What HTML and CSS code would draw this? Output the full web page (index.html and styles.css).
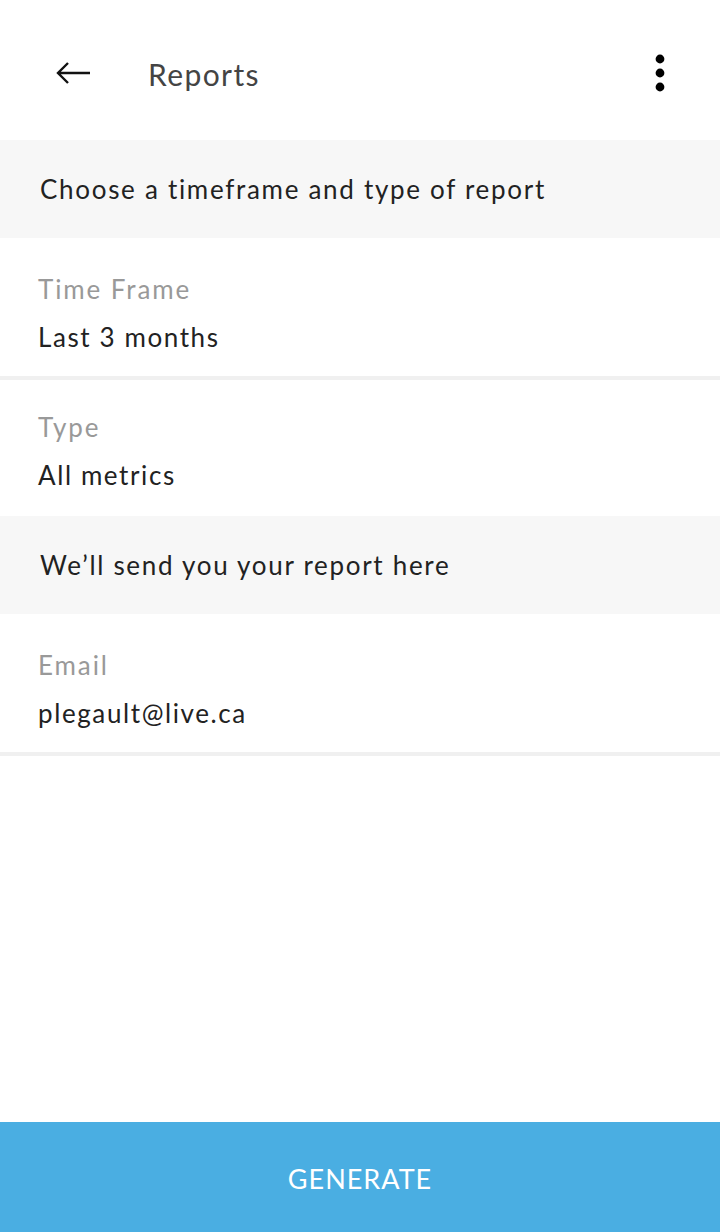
FILE: index.html
```html
<!DOCTYPE html>
<html lang="en">
<head>
  <meta charset="UTF-8">
  <meta name="viewport" content="width=device-width, initial-scale=1">
  <title>Reports</title>
  <link rel="stylesheet" href="styles.css">
</head>
<body>
  <div class="app">
    <!-- Top bar -->
    <div class="topbar">
      <svg class="back-icon" viewBox="0 0 36 24" aria-label="Back">
        <path d="M35 12H3M13 2L3 12l10 10" fill="none" stroke="#111" stroke-width="2.4"/>
      </svg>
      <div class="title">Reports</div>
      <svg class="more-icon" viewBox="0 0 10 38" aria-label="More">
        <circle cx="5" cy="5" r="4.4" fill="#000"/>
        <circle cx="5" cy="19" r="4.4" fill="#000"/>
        <circle cx="5" cy="33" r="4.4" fill="#000"/>
      </svg>
    </div>

    <div class="section">Choose a timeframe and type of report</div>

    <div class="field divided">
      <div class="label">Time Frame</div>
      <div class="value">Last 3 months</div>
    </div>
    <div class="field">
      <div class="label">Type</div>
      <div class="value">All metrics</div>
    </div>

    <div class="section">We’ll send you your report here</div>

    <div class="field divided">
      <div class="label">Email</div>
      <div class="value">plegault@live.ca</div>
    </div>

    <div class="spacer"></div>

    <button class="generate">GENERATE</button>
  </div>
</body>
</html>
```

FILE: styles.css
```css
* {
  margin: 0;
  padding: 0;
  box-sizing: border-box;
}

body {
  background: #ffffff;
  font-family: Lato, "Open Sans", sans-serif;
  color: #222;
}

.app {
  display: flex;
  flex-direction: column;
  height: 1232px;
}

/* Top bar */
.topbar {
  height: 140px;
  display: flex;
  align-items: center;
  padding: 0 55px 0 55px;
}

.back-icon {
  width: 36px;
  height: 24px;
  margin-top: 6px;
}

.title {
  margin-left: 57px;
  font-size: 30px;
  color: #444;
  flex: 1;
  margin-top: 8px;
  letter-spacing: 1.4px;
}

.more-icon {
  width: 10px;
  height: 38px;
  margin-top: 6px;
}

/* Gray section header */
.section {
  background: #f7f7f7;
  height: 98px;
  display: flex;
  align-items: center;
  padding-left: 40px;
  font-size: 26px;
  color: #222;
  letter-spacing: 1.7px;
}

/* Form fields */
.field {
  height: 136px;
  padding: 33px 0 0 38px;
  display: flex;
  flex-direction: column;
  gap: 20px;
}

.field.divided {
  height: 142px;
  padding-top: 37px;
  border-bottom: 4px solid #f0f0f0;
}

.label {
  font-size: 26px;
  line-height: 28px;
  color: #999;
  letter-spacing: 1.9px;
}

.value {
  font-size: 26px;
  line-height: 28px;
  color: #222;
  letter-spacing: 1.6px;
}

.spacer {
  flex: 1;
}

/* Bottom button */
.generate {
  height: 110px;
  border: none;
  background: #4aaee2;
  color: #fff;
  font-family: Lato, "Open Sans", sans-serif;
  font-size: 27px;
  letter-spacing: 1px;
  padding-top: 2px;
}
```
